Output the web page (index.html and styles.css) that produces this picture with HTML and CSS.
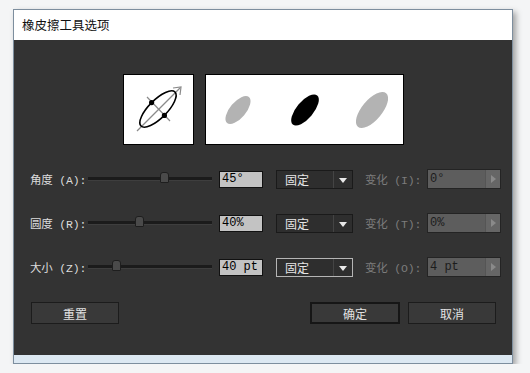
FILE: index.html
```html
<!DOCTYPE html>
<html lang="zh">
<head>
    <meta charset="UTF-8">
    <title>橡皮擦工具选项</title>
    <link rel="stylesheet" href="styles.css">
</head>
<body>
    <div class="ventana">
        <div class="titulo">橡皮擦工具选项</div>
        <div class="contenido">
            <!-- vista previa del pincel -->
            <div class="vista">
                <div class="caja caja-punta">
                    <svg width="69" height="69" viewBox="0 0 69 69">
                        <line x1="13" y1="56" x2="56" y2="13" stroke="#8a8a8a" stroke-width="1.2"/>
                        <polyline points="49,13 57,12 56,20" fill="none" stroke="#8a8a8a" stroke-width="1.2"/>
                        <line x1="23" y1="22" x2="46" y2="46" stroke="#8a8a8a" stroke-width="1.2"/>
                        <ellipse cx="34" cy="34" rx="24" ry="9" transform="rotate(-45 34 34)" fill="none" stroke="#000" stroke-width="1.6"/>
                        <circle cx="27.6" cy="27.6" r="2.6" fill="#000"/>
                        <circle cx="40.4" cy="40.4" r="2.6" fill="#000"/>
                    </svg>
                </div>
                <div class="caja caja-muestra">
                    <svg width="197" height="69" viewBox="0 0 197 69">
                        <ellipse cx="32" cy="35" rx="17" ry="8" transform="rotate(-50 32 35)" fill="#b3b3b3"/>
                        <ellipse cx="99" cy="35" rx="19" ry="8.5" transform="rotate(-50 99 35)" fill="#000"/>
                        <ellipse cx="166" cy="35" rx="22" ry="10" transform="rotate(-50 166 35)" fill="#b3b3b3"/>
                    </svg>
                </div>
            </div>

            <div class="filas">
                <div class="fila">
                    <span class="etiqueta">角度 (A):</span>
                    <div class="deslizador"><span class="pomo" style="left: 72px"></span></div>
                    <div class="valor">45°</div>
                    <div class="lista"><span>固定</span><span class="flecha"></span></div>
                    <span class="etiqueta gris">变化 (I):</span>
                    <div class="valor apagado">0°<span class="boton-flecha"></span></div>
                </div>
                <div class="fila">
                    <span class="etiqueta">圆度 (R):</span>
                    <div class="deslizador"><span class="pomo" style="left: 47px"></span></div>
                    <div class="valor">40%</div>
                    <div class="lista"><span>固定</span><span class="flecha"></span></div>
                    <span class="etiqueta gris">变化 (T):</span>
                    <div class="valor apagado">0%<span class="boton-flecha"></span></div>
                </div>
                <div class="fila">
                    <span class="etiqueta">大小 (Z):</span>
                    <div class="deslizador"><span class="pomo" style="left: 24px"></span></div>
                    <div class="valor">40 pt</div>
                    <div class="lista activa"><span>固定</span><span class="flecha"></span></div>
                    <span class="etiqueta gris">变化 (O):</span>
                    <div class="valor apagado">4 pt<span class="boton-flecha"></span></div>
                </div>
            </div>

            <div class="botones">
                <button class="boton">重置</button>
                <div class="derecha">
                    <button class="boton principal">确定</button>
                    <button class="boton">取消</button>
                </div>
            </div>
        </div>
    </div>
</body>
</html>
```

FILE: styles.css
```css
body {
    margin: 0;
    background-color: #f4f5f6;
    font-family: "Noto Sans CJK SC", "Liberation Sans", sans-serif;
    font-size: 12px;
}

.ventana {
    margin: 9px 0 0 13px;
    width: 498px;
    border: 1px solid #7d8e9e;
    background: #dce8f2;
    box-shadow: 3px 3px 6px rgba(0, 0, 0, 0.35);
}

.titulo {
    height: 30px;
    line-height: 30px;
    padding-left: 8px;
    background: #ffffff;
    color: #111;
    font-size: 12.5px;
}

.contenido {
    background: #333333;
    height: 315px;
    margin-bottom: 8px;
    padding-top: 34px;
    box-sizing: border-box;
}

/* Vista previa */
.vista {
    display: flex;
    justify-content: center;
    gap: 11px;
}

.caja {
    background: #ffffff;
    border: 1px solid #000;
    height: 69px;
}

.caja svg {
    display: block;
}

/* Filas de controles */
.filas {
    margin-top: 24px;
    padding-left: 16px;
    display: flex;
    flex-direction: column;
    gap: 24px;
}

.fila {
    display: flex;
    align-items: center;
    height: 20px;
}

.etiqueta {
    width: 58px;
    color: #dcdcdc;
    white-space: nowrap;
    font-family: "Liberation Mono", "Noto Sans CJK SC", monospace;
    font-size: 11.5px;
    letter-spacing: -0.2px;
}

.etiqueta.gris {
    width: 59px;
    margin-left: 12px;
    color: #7c7c7c;
}

.deslizador {
    position: relative;
    width: 124px;
    height: 3px;
    background: #1b1b1b;
    border-bottom: 1px solid #3e3e3e;
}

.pomo {
    position: absolute;
    top: -5px;
    width: 7px;
    height: 9px;
    background: #4a4a4a;
    border: 1px solid #1e1e1e;
    border-radius: 3px 3px 1px 1px;
}

.valor {
    margin-left: 7px;
    width: 40px;
    height: 15px;
    line-height: 15px;
    padding-left: 2px;
    background: #c3c3c3;
    border: 1px solid #111;
    color: #000;
    font-family: "Liberation Mono", monospace;
    font-size: 12px;
    box-sizing: content-box;
}

.valor.apagado {
    position: relative;
    margin-left: 3px;
    width: 70px;
    height: 18px;
    line-height: 18px;
    background: #5d5d5d;
    border-color: #242424;
    color: #1c1c1c;
}

.boton-flecha {
    position: absolute;
    right: 0;
    top: 0;
    width: 14px;
    height: 18px;
    background: #666;
    border-left: 1px solid #555;
}

.boton-flecha::after {
    content: "";
    position: absolute;
    left: 5px;
    top: 5px;
    border-left: 5px solid #8a8a8a;
    border-top: 4px solid transparent;
    border-bottom: 4px solid transparent;
}

.lista {
    margin-left: 13px;
    width: 75px;
    height: 17px;
    display: flex;
    align-items: center;
    background: #2e2e2e;
    border: 1px solid #1a1a1a;
    color: #e6e6e6;
    position: relative;
}

.lista span:first-child {
    padding-left: 8px;
    flex: 1;
}

.lista.activa {
    border-color: #b5b5b5;
}

.flecha {
    width: 18px;
    height: 17px;
    border-left: 1px solid #444;
    position: relative;
}

.flecha::after {
    content: "";
    position: absolute;
    left: 5px;
    top: 7px;
    border-top: 5px solid #e8e8e8;
    border-left: 4px solid transparent;
    border-right: 4px solid transparent;
}

/* Botones */
.botones {
    margin-top: 25px;
    padding: 0 16px 0 17px;
    display: flex;
    justify-content: space-between;
}

.derecha {
    display: flex;
    gap: 8px;
}

.boton {
    width: 88px;
    height: 22px;
    background: #393939;
    border: 1px solid #1c1c1c;
    color: #e2e2e2;
    font-family: "Noto Sans CJK SC", sans-serif;
    font-size: 12px;
    padding: 0;
}

.boton.principal {
    width: 90px;
    border: 2px solid #161616;
}
```
